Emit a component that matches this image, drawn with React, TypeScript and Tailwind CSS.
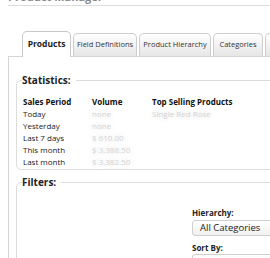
import React from "react";

const font = { fontFamily: '"Open Sans", "Liberation Sans", sans-serif' };

function Tab({ label, active, w }: { label: string; active?: boolean; w: string }) {
  if (active) {
    return (
      <div className={`${w} h-[26px] -mb-px bg-white border border-b-0 border-[#c8c8c8] rounded-t-[5px] flex items-center justify-center text-[8.5px] font-bold text-[#222] relative z-10`}>
        {label}
      </div>
    );
  }
  return (
    <div className={`${w} h-[23px] bg-gradient-to-b from-white to-[#e6e6e6] border border-b-0 border-[#cdcdcd] rounded-t-[5px] flex items-center justify-center text-[7.5px] text-[#333]`}>
      {label}
    </div>
  );
}

const blur = "text-[#d4d4d4] [text-shadow:0_0_6px_#cfcfcf]";

export default function App() {
  const rows: [string, string, string][] = [
    ["Today", "none", "Single Red Rose"],
    ["Yesterday", "none", ""],
    ["Last 7 days", "$ 610.00", ""],
    ["This month", "$ 3,388.50", ""],
    ["Last month", "$ 3,382.50", ""],
  ];
  return (
    <div className="w-[270px] h-[258px] overflow-hidden bg-white text-[#111]" style={font}>
      <div className="ml-[8px] h-[6px] border-b border-[#dcdcdc] overflow-hidden">
        <div className="-mt-[9px] text-[11px] font-bold text-[#888] leading-[12px]">Product Manager</div>
      </div>
      <div className="flex items-end gap-[2px] ml-[22px] mt-[24px] h-[26px] w-[300px]">
        <Tab label="Products" active w="w-[49px]" />
        <Tab label="Field Definitions" w="w-[64px]" />
        <Tab label="Product Hierarchy" w="w-[72px]" />
        <Tab label="Categories" w="w-[50px]" />
        <Tab label="" w="w-[40px]" />
      </div>
      <div className="ml-[8px] w-[300px] border-l border-t border-[#d4d4d4] pt-[16px] pl-[7px] h-[220px]">
        <fieldset className="border border-[#dcdcdc] rounded-[5px] pl-[6px] pb-[4px] w-[300px] h-[97px]">
          <legend className="text-[10px] font-bold text-[#222] pr-[5px] ml-[-1px] leading-[14px]">Statistics:</legend>
          <table className="mt-[9px] text-[8px] leading-[12px] border-collapse">
            <thead>
              <tr className="font-bold text-left">
                <th className="w-[69px] p-0 font-bold">Sales Period</th>
                <th className="w-[60px] p-0 font-bold">Volume</th>
                <th className="p-0 font-bold">Top Selling Products</th>
              </tr>
            </thead>
            <tbody>
              {rows.map(([a, b, c]) => (
                <tr key={a}>
                  <td className="p-0 text-[#222]">{a}</td>
                  <td className={`p-0 ${blur}`}>{b}</td>
                  <td className={`p-0 ${blur}`}>{c}</td>
                </tr>
              ))}
            </tbody>
          </table>
        </fieldset>
        <fieldset className="mt-[5px] border border-[#dcdcdc] rounded-[5px] pl-[6px] w-[300px] h-[120px]">
          <legend className="text-[10px] font-bold text-[#222] pr-[5px] ml-[-1px] leading-[14px]">Filters:</legend>
          <div className="ml-[169px] mt-[19px] flex flex-col">
            <div className="text-[8px] font-bold text-[#222] leading-[10px]">Hierarchy:</div>
            <div className="mt-[2px] w-[110px] h-[16px] border border-[#d0d0d0] rounded-[3px] bg-gradient-to-b from-white to-[#f0f0f0] pl-[7px] text-[9.5px] leading-[14px] text-[#222]">All Categories</div>
            <div className="mt-[7px] text-[8px] font-bold text-[#222] leading-[10px]">Sort By:</div>
            <div className="mt-[1px] w-[110px] h-[16px] border border-[#d0d0d0] rounded-[3px] bg-gradient-to-b from-white to-[#f0f0f0] pl-[7px] text-[9.5px] leading-[14px] text-[#222]">Created Date</div>
          </div>
        </fieldset>
      </div>
    </div>
  );
}
